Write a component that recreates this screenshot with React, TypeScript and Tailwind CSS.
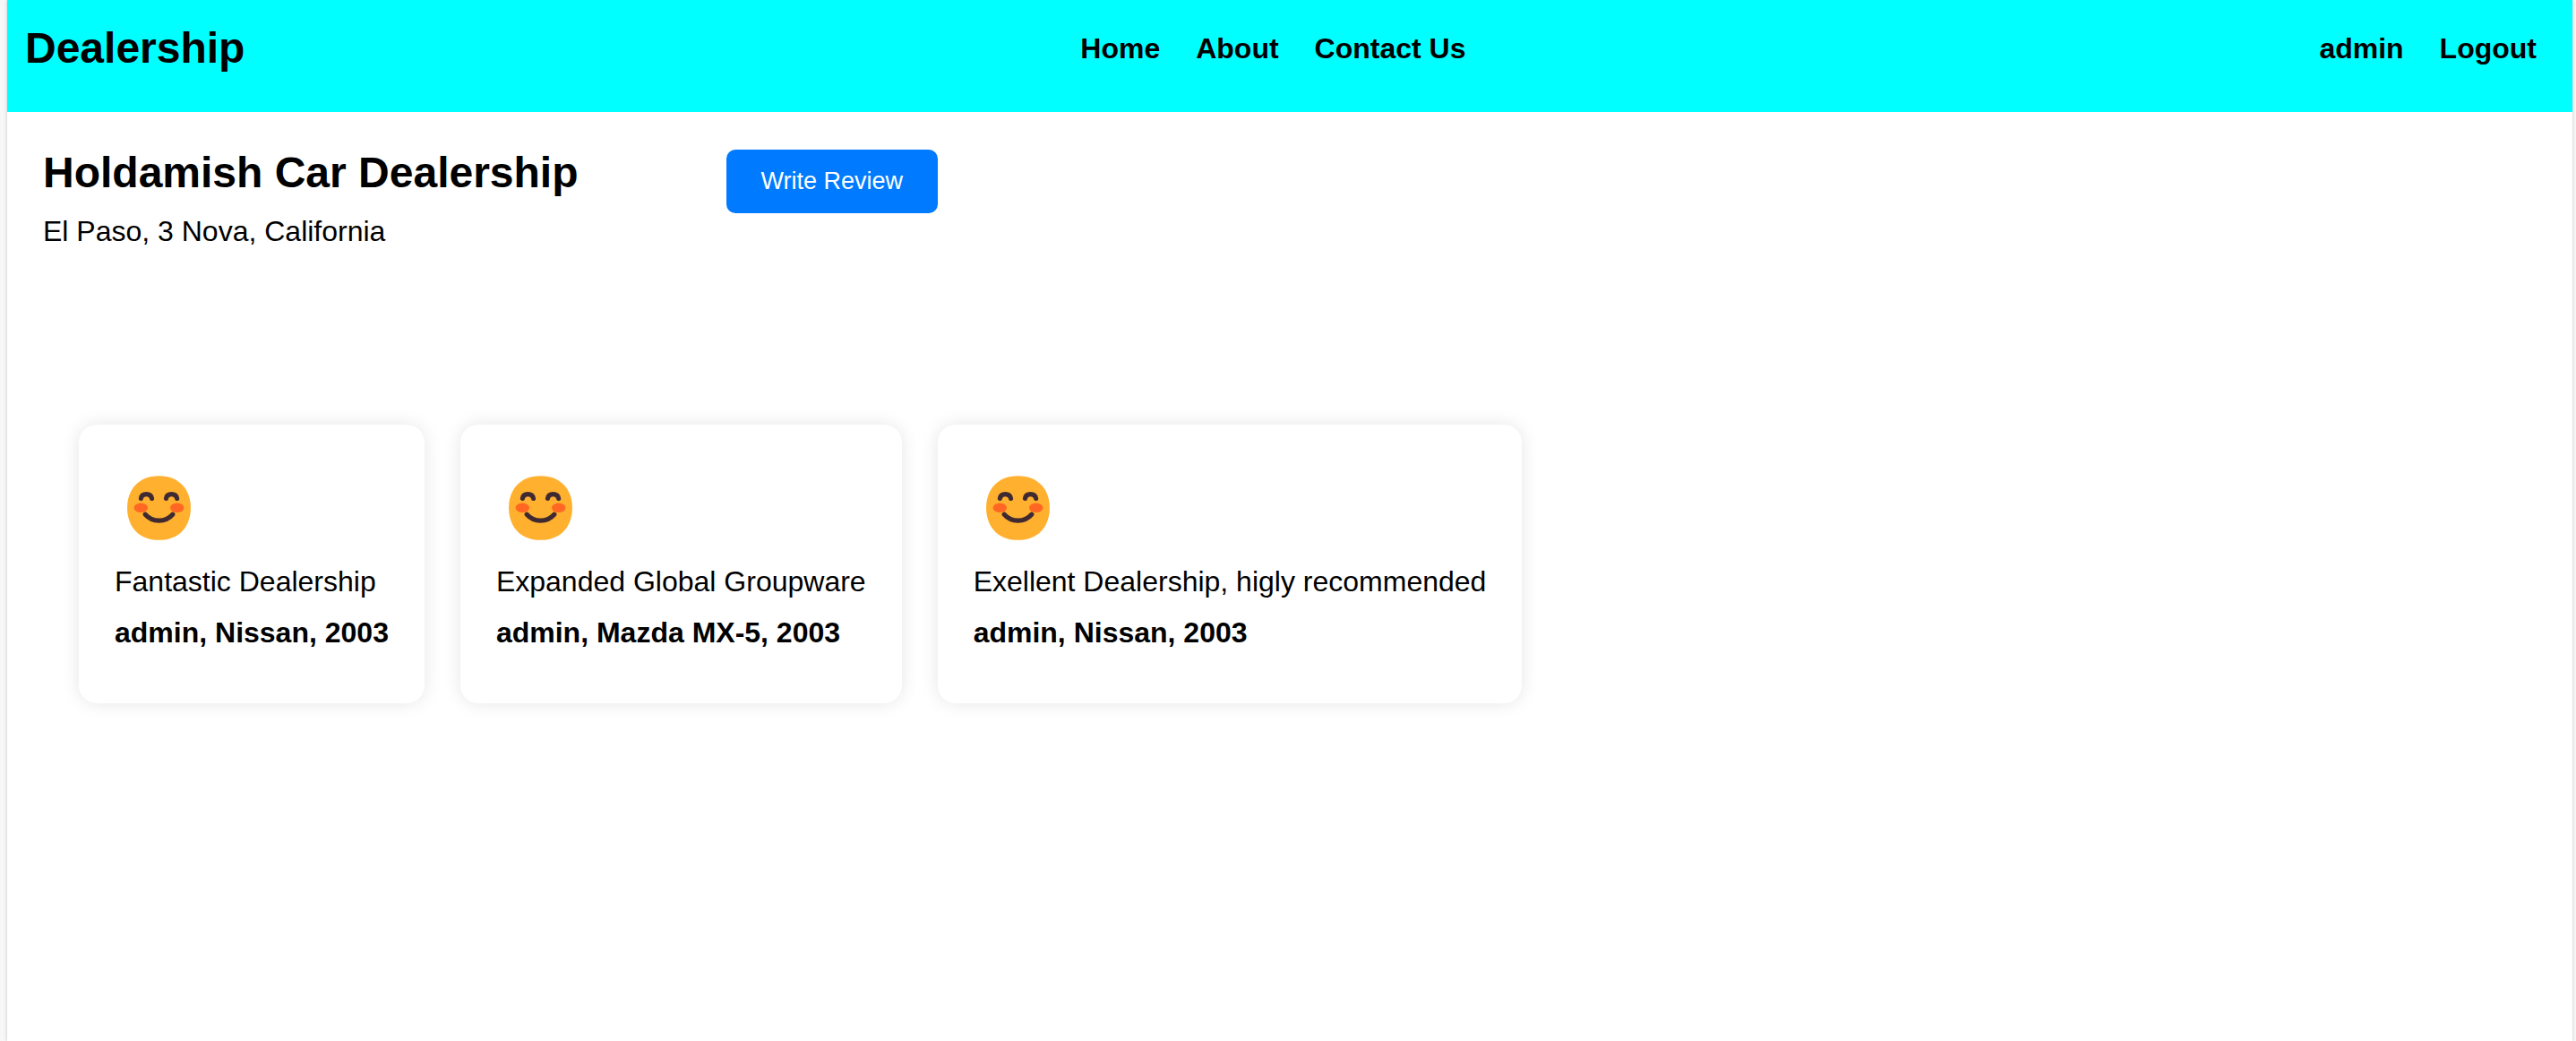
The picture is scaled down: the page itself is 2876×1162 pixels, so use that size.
type Review = { id: number; text: string; author: string };

const reviews: Review[] = [
  { id: 1, text: "Fantastic Dealership", author: "admin, Nissan, 2003" },
  { id: 2, text: "Expanded Global Groupware", author: "admin, Mazda MX-5, 2003" },
  { id: 3, text: "Exellent Dealership, higly recommended", author: "admin, Nissan, 2003" },
];

const menu = ["Home", "About", "Contact Us"];
const account = ["admin", "Logout"];

function SmilingFace() {
  return (
    <svg viewBox="0 0 100 100" className="size-[100px]" role="img" aria-label="Positive review">
      <path
        transform="translate(9 12.4) scale(2.53)"
        fill="#ffb02e"
        d="M16 30.2C25.33 30.2 30 23.73 30 16C30 8.27 25.33 1.9 16 1.9C6.66 1.9 2 8.27 2 16C2 23.73 6.66 30.2 16 30.2Z"
      />
      <ellipse cx="29.3" cy="52.7" rx="7.7" ry="5.3" fill="#ff6723" />
      <ellipse cx="69.7" cy="52.7" rx="7.7" ry="5.3" fill="#ff6723" />
      <g fill="none" stroke="#402a32" strokeWidth="5.2" strokeLinecap="round">
        <path d="M29.4 42.4C29.8 39.5 32 37.6 35.4 37.6C38.8 37.6 41 39.5 41.5 42.4" />
        <path d="M57.5 42.4C57.9 39.5 60.1 37.6 63.5 37.6C66.9 37.6 69.1 39.5 69.6 42.4" />
        <path d="M34.2 60.3C38 64.6 43.2 67.2 49.5 67.2C55.8 67.2 61 64.6 64.8 60.3" />
      </g>
    </svg>
  );
}

function NavLinks({ items }: { items: string[] }) {
  return (
    <ul className="flex">
      {items.map((item) => (
        <li key={item} className="mx-5">
          <a href="#" className="text-[32px] leading-9 font-bold">
            {item}
          </a>
        </li>
      ))}
    </ul>
  );
}

export default function App() {
  return (
    <div className="min-h-screen bg-[#f7f7f7] pr-1 pl-2 font-['Liberation_Sans',Arial,sans-serif] text-black">
      <div className="min-h-screen bg-white shadow-[0_0_4px_rgba(0,0,0,0.2)]">
        <nav className="flex items-center justify-between bg-[#00ffff] px-5 pt-5 pb-[37px]">
          <a href="#" className="py-1.5 text-5xl leading-[56px] font-bold">
            Dealership
          </a>
          <NavLinks items={menu} />
          <NavLinks items={account} />
        </nav>

        <main className="px-10 pt-10">
          <header className="flex items-start gap-[165px]">
            <div>
              <h1 className="text-5xl leading-[56px] font-bold">Holdamish Car Dealership</h1>
              <p className="mt-[19px] text-[32px] leading-9">El Paso, 3 Nova, California</p>
            </div>
            <button
              type="button"
              className="mt-0.5 rounded-[10px] bg-[#007bff] px-[39px] py-5 text-[27px] leading-[31px] text-white"
            >
              Write Review
            </button>
          </header>

          <section className="mt-[198px] flex flex-wrap gap-10 px-10 pb-10" aria-label="Reviews">
            {reviews.map((review) => (
              <article
                key={review.id}
                className="rounded-[20px] bg-white px-10 pt-10 pb-[61px] shadow-[0_0_20px_rgba(0,0,0,0.1)]"
              >
                <SmilingFace />
                <p className="mt-[17px] text-[32px] leading-9">{review.text}</p>
                <p className="mt-[21px] text-[32px] leading-9 font-bold">{review.author}</p>
              </article>
            ))}
          </section>
        </main>
      </div>
    </div>
  );
}
